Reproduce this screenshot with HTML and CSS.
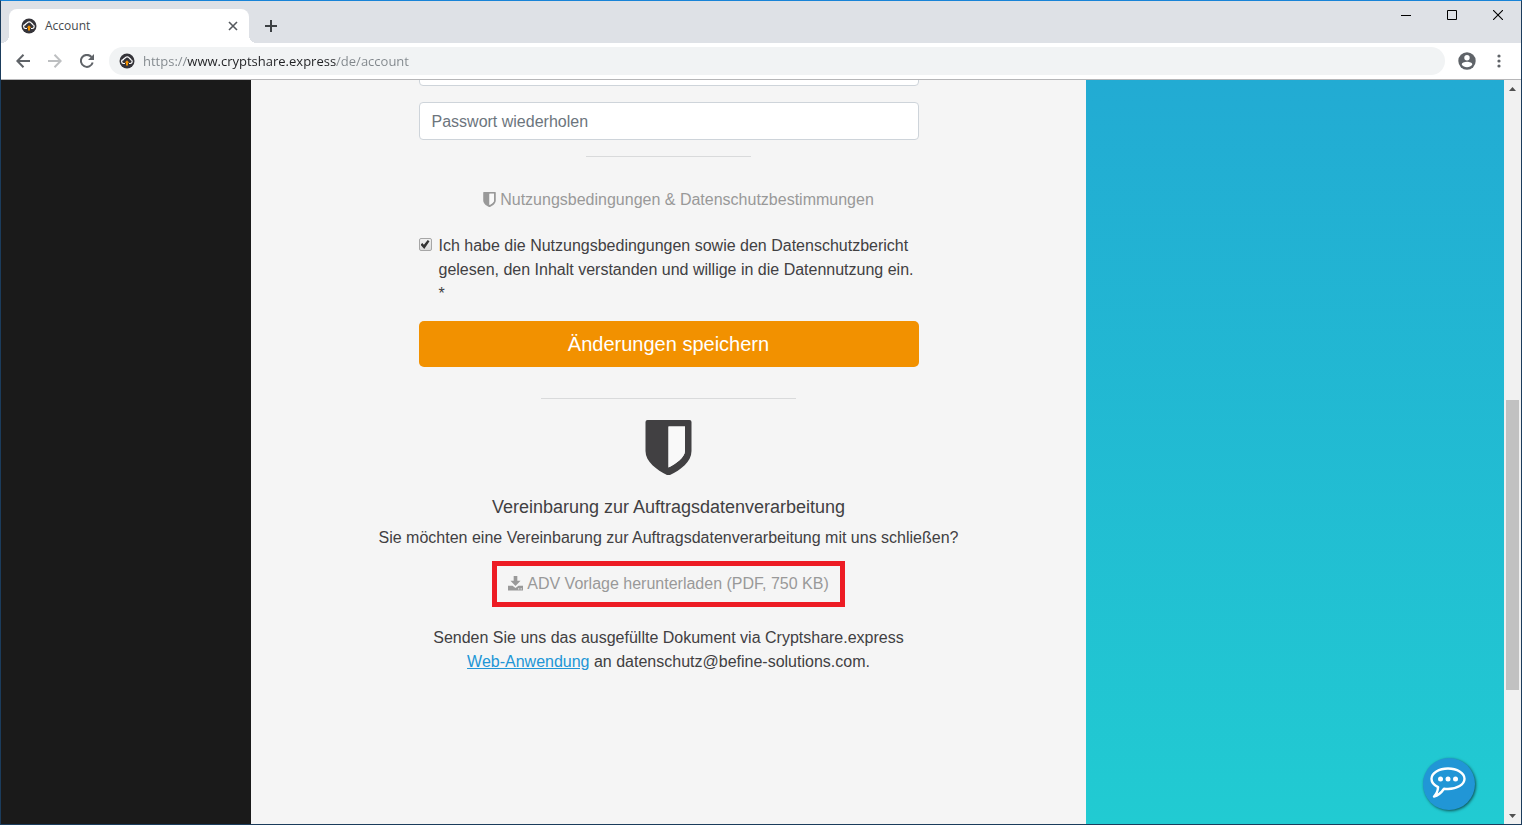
FILE: index.html
```html
<!DOCTYPE html>
<html lang="de">
<head>
<meta charset="utf-8">
<title>Account</title>
<link rel="stylesheet" href="styles.css">
</head>
<body>
<svg class="defs" aria-hidden="true">
  <symbol id="favicon" viewBox="0 0 16 16">
    <circle cx="8" cy="8" r="7.500" fill="#35343a"/>
    <path d="M6 10.500H4.700a1.900 1.900 0 0 1-.3-3.800 2 2 0 0 1 1.500-1.600 2.600 2.600 0 0 1 4.600.2 2 2 0 0 1 1.400 1.500 1.900 1.900 0 0 1-.6 3.700H10" fill="none" stroke="#fff" stroke-width="1.200"/>
    <path d="M8 7.200l2.300 2.600H9v2.800H7V9.800H5.700z" fill="#f29100"/>
  </symbol>
  <symbol id="shield" viewBox="0 0 47 55">
    <path fill-rule="evenodd" fill="currentColor" d="M2.500 0h42q2 0 2 2v29c0 11-11 19-21.500 24h-3C12 50 .5 42 .5 31V2q0-2 2-2zM23.500 6.500v41C31 44 40 37 40 31V6.500z"/>
    <path class="shield-inner" d="M23.500 6.500v41C31 44 40 37 40 31V6.500z"/>
  </symbol>
</svg>
<div class="window">
  <header class="tabstrip">
    <div class="tab">
      <svg class="icon16"><use href="#favicon"/></svg>
      <span class="tab-title">Account</span>
      <button class="bare tab-close" aria-label="Tab schließen"><svg width="10" height="10" viewBox="0 0 10 10"><path d="M1 1l8 8M9 1L1 9" stroke="#55595e" stroke-width="1.600"/></svg></button>
    </div>
    <button class="bare new-tab" aria-label="Neuer Tab"><svg width="12" height="12" viewBox="0 0 12 12"><path d="M6 0v12M0 6h12" stroke="#3c4043" stroke-width="2"/></svg></button>
    <div class="window-buttons">
      <button class="bare" aria-label="Minimieren"><svg width="10" height="10" viewBox="0 0 10 10"><path d="M0 5.500h10" stroke="#000"/></svg></button>
      <button class="bare" aria-label="Maximieren"><svg width="10" height="10" viewBox="0 0 10 10"><path d="M.5.5h9v9h-9z" fill="none" stroke="#000"/></svg></button>
      <button class="bare" aria-label="Schließen"><svg width="10" height="10" viewBox="0 0 10 10"><path d="M0 0l10 10M10 0L0 10" stroke="#000" stroke-width="1.100"/></svg></button>
    </div>
  </header>
  <nav class="toolbar">
    <button class="bare nav-button" aria-label="Zurück"><svg width="14" height="14" viewBox="0 0 14 14" fill="none" stroke="#5f6368" stroke-width="2"><path d="M14 7H1.500M7.500.8L1.300 7l6.200 6.200"/></svg></button>
    <button class="bare nav-button" aria-label="Vorwärts"><svg width="14" height="14" viewBox="0 0 14 14" fill="none" stroke="#bdbfc1" stroke-width="2"><path d="M0 7h12.500M6.500.8L12.700 7l-6.200 6.200"/></svg></button>
    <button class="bare nav-button" aria-label="Neu laden"><svg width="14" height="14" viewBox="0 0 14 14"><path d="M12.700 8.500A6 6 0 1 1 11.500 3" fill="none" stroke="#5f6368" stroke-width="2"/><path d="M14 0v6H8z" fill="#5f6368"/></svg></button>
    <div class="omnibox">
      <svg class="icon16"><use href="#favicon"/></svg>
      <input class="url" type="text" aria-label="Adresse" value="https://www.cryptshare.express/de/account">
    </div>
    <button class="bare nav-button" aria-label="Profil"><svg width="18" height="18" viewBox="0 0 18 18"><circle cx="9" cy="9" r="8.700" fill="#5f6368"/><circle cx="9" cy="5.800" r="2.700" fill="#fff"/><path d="M3.700 12.500c0-3.600 10.600-3.600 10.600 0-2.200 3.500-8.400 3.500-10.600 0z" fill="#fff"/></svg></button>
    <button class="bare nav-button" aria-label="Menü"><svg width="4" height="14" viewBox="0 0 4 14" fill="#5f6368"><circle cx="2" cy="2" r="1.600"/><circle cx="2" cy="7" r="1.600"/><circle cx="2" cy="12" r="1.600"/></svg></button>
  </nav>
  <div class="viewport">
    <aside class="side-dark"></aside>
    <main class="panel">
      <form class="account-form">
        <input class="field" type="password" aria-label="Passwort">
        <input class="field" type="password" aria-label="Passwort wiederholen" placeholder="Passwort wiederholen">
        <hr class="rule rule-short">
        <a class="terms" href="#"><svg class="mini-shield"><use href="#shield"/></svg> Nutzungsbedingungen &amp; Datenschutzbestimmungen</a>
        <div class="consent">
          <input class="check" type="checkbox" id="consent" checked>
          <label for="consent">Ich habe die Nutzungsbedingungen sowie den Datenschutzbericht gelesen, den Inhalt verstanden und willige in die Datennutzung ein. <span class="required">*</span></label>
        </div>
        <button class="save" type="submit">Änderungen speichern</button>
        <hr class="rule rule-long">
      </form>
      <section class="agreement">
        <svg class="big-shield"><use href="#shield"/></svg>
        <h2>Vereinbarung zur Auftragsdatenverarbeitung</h2>
        <p>Sie möchten eine Vereinbarung zur Auftragsdatenverarbeitung mit uns schließen?</p>
        <a class="download" href="#"><svg class="download-icon" viewBox="0 0 14 14"><path fill="currentColor" fill-rule="evenodd" d="M5.300 0h3.400v4.500h3L7 9.300 2.300 4.500h3zM0 9h4.200L7 11.300 9.800 9H14v4.500H0zM9.500 11.500v1h1v-1zM11.800 11.500v1h1v-1z"/></svg> ADV Vorlage herunterladen (PDF, 750 KB)</a>
        <p>Senden Sie uns das ausgefüllte Dokument via Cryptshare.express<br><a class="link" href="#">Web-Anwendung</a> an datenschutz@befine-solutions.com.</p>
      </section>
    </main>
    <aside class="side-teal">
      <button class="bare chat" aria-label="Chat"><svg width="36" height="32" viewBox="0 0 36 32"><path d="M18 1.500c9 0 16.500 4.500 16.500 10.300S27 22 18 22c-1.500 0-2.800-.1-4-.3-2.600 3.800-6 6.800-10 7.800 2.500-2.400 3.800-5.300 4.100-9.300C4 18.300 1.500 15.400 1.500 11.800 1.500 6 9 1.500 18 1.500z" fill="none" stroke="#fff" stroke-width="2.400" stroke-linejoin="round"/><g fill="#fff"><circle cx="10.500" cy="12" r="2.500"/><circle cx="18" cy="12" r="2.500"/><circle cx="25.500" cy="12" r="2.500"/></g></svg></button>
    </aside>
    <div class="scrollbar">
      <button class="bare scroll-arrow" aria-label="Nach oben"><svg width="7" height="4" viewBox="0 0 7 4"><path d="M3.500 0L7 4H0z" fill="#505050"/></svg></button>
      <div class="track"><div class="thumb"></div></div>
      <button class="bare scroll-arrow" aria-label="Nach unten"><svg width="7" height="4" viewBox="0 0 7 4"><path d="M3.500 4L7 0H0z" fill="#505050"/></svg></button>
    </div>
  </div>
</div>
</body>
</html>
```
FILE: styles.css
```css
* { box-sizing: border-box; }
body { margin: 0; font: 16px/24px "Liberation Sans", Arial, sans-serif; color: #414042; }
svg { display: block; flex: none; }
.defs { position: absolute; width: 0; height: 0; }
.bare { display: flex; align-items: center; justify-content: center; padding: 0; border: 0; background: none; }
.window { display: flex; flex-direction: column; height: 100vh; border: 1px solid #1b3c5c; border-top-color: #1883d7; }

.tabstrip { display: flex; height: 42px; flex: none; padding: 8px 0 0 8px; background: #dee1e6; }
.tab { position: relative; display: flex; align-items: center; width: 240px; padding: 0 10px 0 12px; border-radius: 8px 8px 0 0; background: #fff; }
.tab::before, .tab::after { content: ""; position: absolute; bottom: 0; width: 8px; height: 8px; }
.tab::before { right: 100%; background: radial-gradient(circle at 0 0, #dee1e6 8px, #fff 8px); }
.tab::after { left: 100%; background: radial-gradient(circle at 100% 0, #dee1e6 8px, #fff 8px); }
.icon16 { width: 16px; height: 16px; }
.tab-title { flex: 1; margin-left: 8px; font: 12px/16px "Open Sans", "Noto Sans", sans-serif; color: #45494d; }
.tab-close { width: 12px; height: 16px; }
.new-tab { width: 28px; margin-left: 8px; }
.window-buttons { display: flex; align-self: flex-start; margin: -8px 0 0 auto; }
.window-buttons .bare { width: 46px; height: 28px; }

.toolbar { display: flex; align-items: center; height: 37px; flex: none; gap: 4px; padding: 0 8px; border-bottom: 1px solid #b6b6b8; background: #fff; }
.nav-button { width: 28px; height: 28px; }
.omnibox { display: flex; align-items: center; flex: 1; height: 28px; margin: 0 4px; padding: 0 10px; gap: 8px; border-radius: 14px; background: #f1f3f4; }
.url { flex: 1; padding: 0; border: 0; font: 13px/20px "Open Sans", "Noto Sans", sans-serif; color: transparent; background: linear-gradient(90deg, #80868b 44px, #202124 44px, #202124 193px, #80868b 193px); background-clip: text; -webkit-background-clip: text; }

.viewport { display: grid; grid-template-columns: 250fr 835fr 418fr 17px; flex: 1; min-height: 0; }
.side-dark { background: #1a1a1a; }
.panel { overflow: hidden; background: #f5f5f5; }
.account-form { display: flex; flex-direction: column; width: 60%; max-width: 500px; margin: -32px auto 0; }
.field { width: 100%; height: 38px; margin-bottom: 16px; padding: 7px 12px 5px; border: 1px solid #ced4da; border-radius: 4px; background: #fff; font: inherit; }
.field::placeholder { color: #6c757d; opacity: 1; }
.rule { height: 1px; margin: 0 auto; border: 0; background: #d9dadb; }
.rule-short { width: 33%; }
.rule-long { width: 51%; margin-top: 31px; }
.terms { display: flex; align-items: center; justify-content: center; gap: 4px; margin: 31px 0 22px; padding-left: 20px; color: #999; text-decoration: none; }
.mini-shield { width: 13px; height: 15px; margin-bottom: 2px; }
.shield-inner { fill: #f9f9f9; }
.consent { display: flex; align-items: flex-start; gap: 7px; }
.check { appearance: none; flex: none; display: flex; align-items: center; justify-content: center; width: 13px; height: 13px; margin: 4px 0 0; border: 1px solid #a6a6a6; border-radius: 2px; background: linear-gradient(#f0f0f0, #dcdcdc); }
.check:checked::before { content: ""; width: 9px; height: 9px; background: #333; clip-path: polygon(0 52%, 20% 32%, 38% 52%, 80% 0, 100% 14%, 42% 100%); }
.required { display: block; }
.save { height: 46px; margin-top: 15px; border: 0; border-radius: 5px; background: #f29100; color: #fff; font: 20px/30px "Liberation Sans", Arial, sans-serif; }
.agreement { display: flex; flex-direction: column; align-items: center; text-align: center; }
.big-shield { width: 47px; height: 55px; margin-top: 21px; }
.agreement h2 { margin: 20px 0 7px; font-size: 18px; line-height: 24px; font-weight: 400; }
.agreement p { margin: 0; }
.download { display: flex; align-items: center; gap: 4px; margin: 11px 0 19px; padding: 6px 11px; border: 5px solid #ed1c24; color: #999; text-decoration: none; }
.download-icon { width: 15px; height: 15px; margin-bottom: 2px; }
.link { color: #2196d6; }

.side-teal { display: flex; align-items: flex-end; justify-content: flex-end; padding: 0 29px 14px; background: linear-gradient(#22abd3, #21cbd2); }
.chat { width: 52px; height: 52px; padding: 0 2px 3px 0; border-radius: 50%; background: #2196d6; box-shadow: 1px 1px 3px #00000099; }
.scrollbar { display: flex; flex-direction: column; background: #f1f1f1; }
.scroll-arrow { height: 17px; }
.track { flex: 1; padding: 0 2px; display: flex; flex-direction: column; }
.track::before { content: ""; flex: 303; }
.track::after { content: ""; flex: 117; }
.thumb { flex: 290; background: #c1c1c1; }
```
